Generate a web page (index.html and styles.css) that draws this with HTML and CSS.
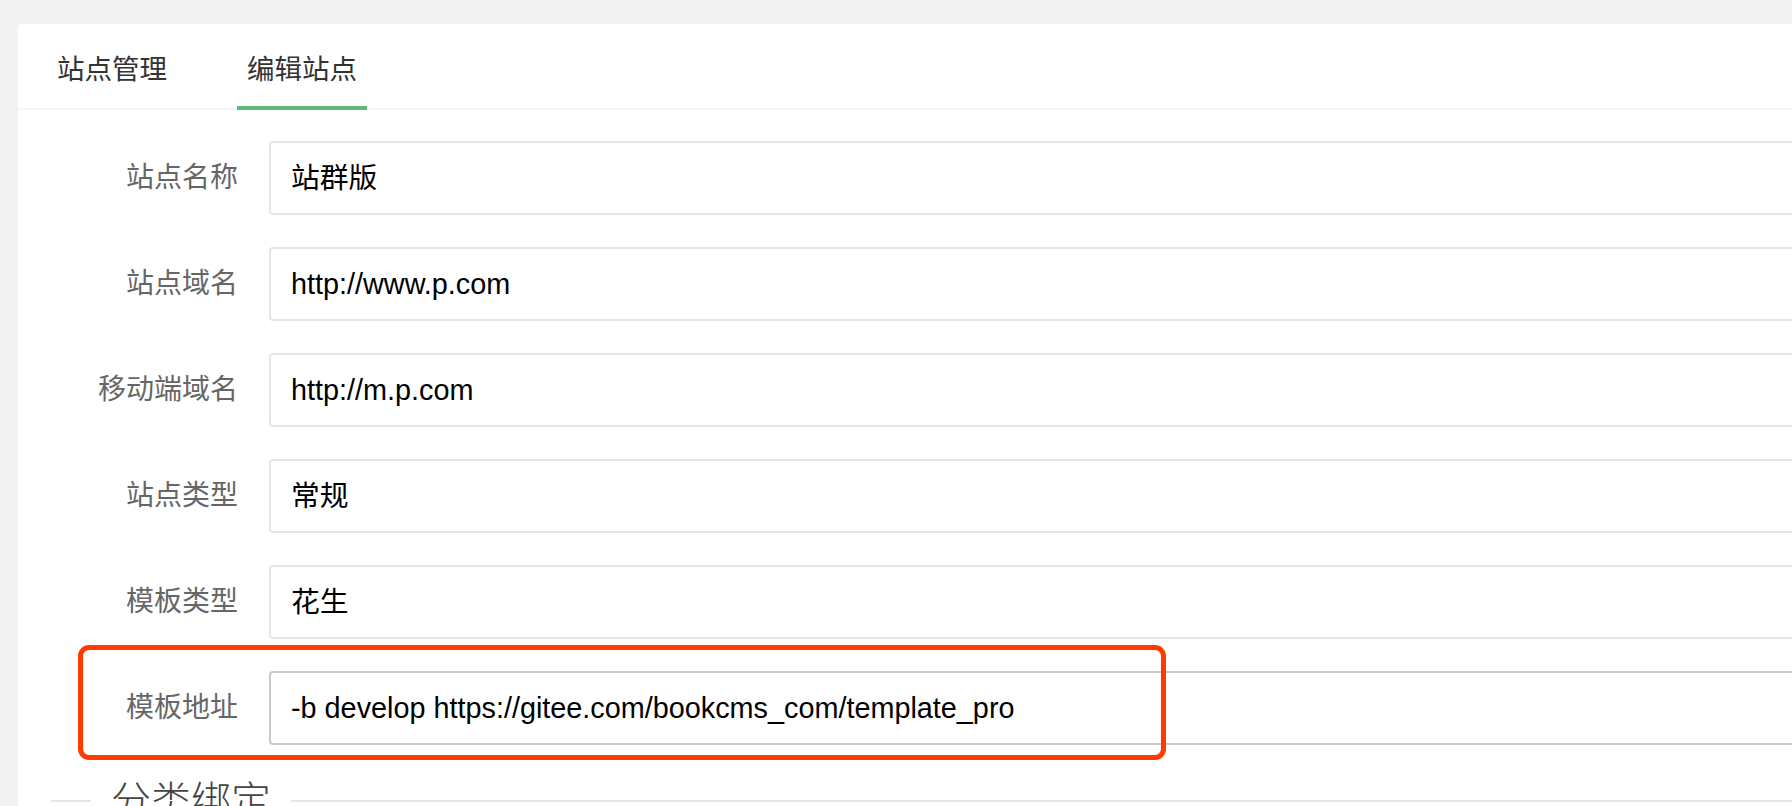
FILE: index.html
```html
<!DOCTYPE html>
<html lang="zh-CN">
<head>
<meta charset="utf-8">
<title>编辑站点</title>
<link rel="stylesheet" href="styles.css">
</head>
<body>
<div class="card">
  <ul class="tab-title">
    <li class="tab">站点管理</li>
    <li class="tab active">编辑站点</li>
  </ul>
  <div class="tab-content">
    <div class="form-item">
      <label class="label">站点名称</label>
      <div class="input">站群版</div>
    </div>
    <div class="form-item">
      <label class="label">站点域名</label>
      <div class="input">http://www.p.com</div>
    </div>
    <div class="form-item">
      <label class="label">移动端域名</label>
      <div class="input">http://m.p.com</div>
    </div>
    <div class="form-item">
      <label class="label">站点类型</label>
      <div class="input">常规</div>
    </div>
    <div class="form-item">
      <label class="label">模板类型</label>
      <div class="input">花生</div>
    </div>
    <div class="form-item highlighted">
      <label class="label">模板地址</label>
      <div class="input input-hover">-b develop https://gitee.com/bookcms_com/template_pro</div>
      <div class="mark"></div>
    </div>
    <fieldset class="field-title">
      <legend>分类绑定</legend>
    </fieldset>
  </div>
</div>
</body>
</html>
```

FILE: styles.css
```css
html, body {
  margin: 0;
  padding: 0;
  overflow: hidden;
  height: 100%;
}

body {
  background: #f2f2f2;
  font-family: "Liberation Sans", "Noto Sans CJK SC", sans-serif;
  padding: 24px 0 0 18px;
  box-sizing: border-box;
}

.card {
  background: #fff;
  border-radius: 4px;
  margin-right: -60px;
  min-height: 900px;
}

.tab-title {
  list-style: none;
  margin: 0;
  padding: 0 0 0 29px;
  display: flex;
  height: 84px;
  border-bottom: 2px solid #f6f6f6;
}

.tab {
  box-sizing: border-box;
  height: 86px;
  margin-bottom: -2px;
  margin-right: 60px;
  padding: 4px 10px 0;
  border-bottom: 4px solid transparent;
  display: flex;
  align-items: center;
  font-size: 27.5px;
  color: #333;
}

.tab.active {
  border-bottom-color: #5fb878;
}

.tab-content {
  padding: 31px 31px 0 31px;
}

.form-item {
  display: flex;
  margin-bottom: 32px;
}

.highlighted {
  position: relative;
}

.label {
  width: 220px;
  flex: none;
  box-sizing: border-box;
  padding-right: 31px;
  text-align: right;
  font-size: 28px;
  line-height: 74px;
  color: #666;
}

.input {
  flex: 1;
  box-sizing: border-box;
  height: 74px;
  border: 2px solid #e6e6e6;
  border-radius: 4px;
  padding-left: 20px;
  font-size: 28.8px;
  line-height: 70px;
  color: #000;
  white-space: nowrap;
}

.input-hover {
  border-color: #c9c9c9;
}

.mark {
  position: absolute;
  left: 29px;
  top: -26px;
  width: 1088px;
  height: 115px;
  box-sizing: border-box;
  border: 5px solid #ff3b00;
  border-radius: 11px;
  pointer-events: none;
}

.field-title {
  margin: 2px 0 0 2px;
  padding: 0;
  border: 0;
  border-top: 2px solid #e6e6e6;
  min-inline-size: 0;
}

.field-title legend {
  margin-left: 40px;
  padding: 0 20px;
  font-size: 40px;
  line-height: 48px;
  font-weight: 300;
  color: #444;
}
```
